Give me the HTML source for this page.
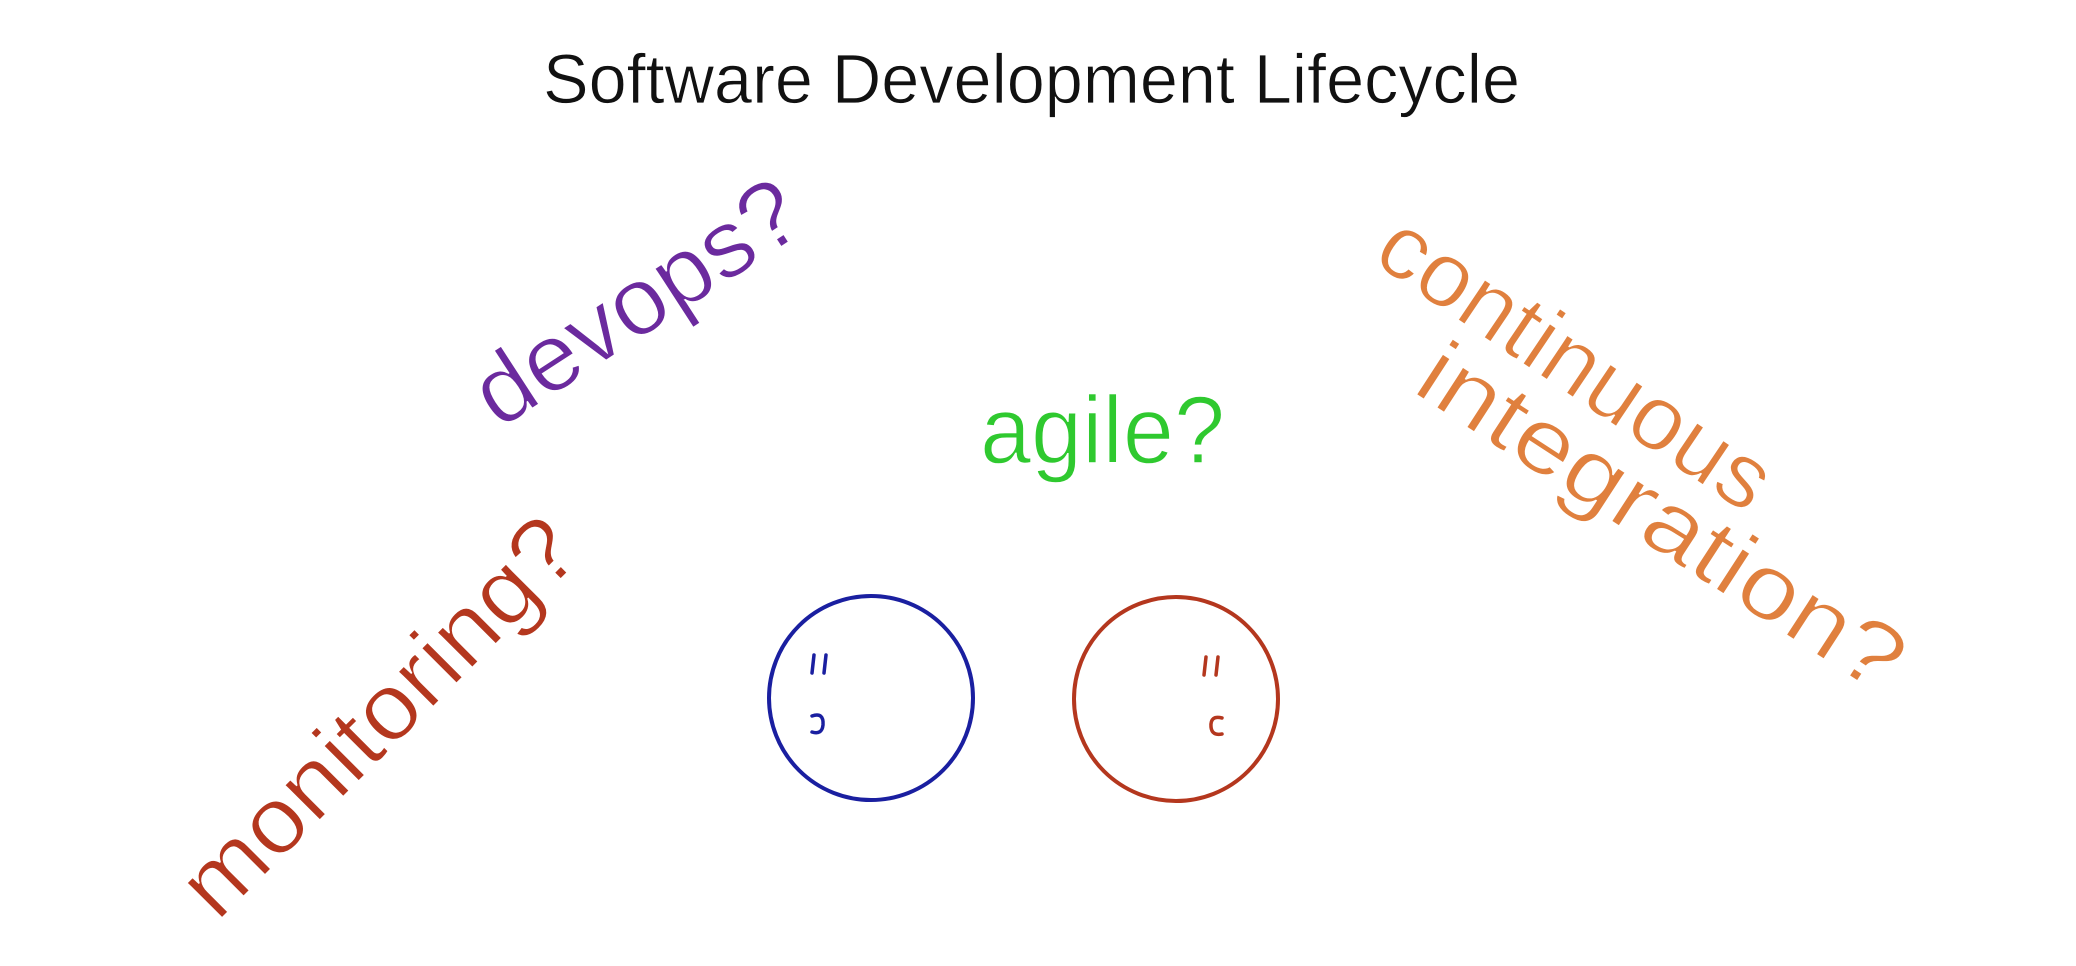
<!DOCTYPE html>
<html><head><meta charset="utf-8"><style>
html,body{margin:0;padding:0;background:#fff;width:2076px;height:966px;overflow:hidden}
svg{display:block}
text{font-family:"Liberation Sans",sans-serif;stroke:#fff;stroke-width:1.5px}
</style></head><body>
<svg width="2076" height="966" viewBox="0 0 2076 966">
<rect width="2076" height="966" fill="#fff"/>
<text x="543" y="103" font-size="70" fill="#111" style="stroke-width:0.8px" textLength="977" lengthAdjust="spacingAndGlyphs">Software Development Lifecycle</text>

<g transform="translate(642,311) rotate(-33)">
<text x="0" y="22" font-size="96" fill="#6b2a9e" text-anchor="middle" textLength="370" lengthAdjust="spacingAndGlyphs">devops?</text>
</g>

<text x="980" y="463" font-size="96" fill="#2fc92f" textLength="245" lengthAdjust="spacingAndGlyphs">agile?</text>

<g transform="translate(384,722) rotate(-45)">
<text x="0" y="24" font-size="94" fill="#b4371e" text-anchor="middle" textLength="520" lengthAdjust="spacingAndGlyphs">monitoring?</text>
</g>

<g transform="translate(1572,368) rotate(34)">
<text x="0" y="24" font-size="92" fill="#e0803e" text-anchor="middle" textLength="455" lengthAdjust="spacingAndGlyphs">continuous</text>
</g>
<g transform="translate(1658,523) rotate(33)">
<text x="0" y="24" font-size="92" fill="#e0803e" text-anchor="middle" textLength="560" lengthAdjust="spacingAndGlyphs">integration?</text>
</g>

<circle cx="871" cy="698" r="102" fill="none" stroke="#1a1fa0" stroke-width="4"/>
<path d="M814 655 l-2 18 M826 655 l-2 18" stroke="#1a1fa0" stroke-width="3.5" fill="none" stroke-linecap="round"/>
<path d="M812 716 q12 -4 11 9 q-1 10 -11 7" stroke="#1a1fa0" stroke-width="3.5" fill="none" stroke-linecap="round"/>

<circle cx="1176" cy="699" r="102" fill="none" stroke="#b4371e" stroke-width="4"/>
<path d="M1206 657 l-2 18 M1218 657 l-2 18" stroke="#b4371e" stroke-width="3.5" fill="none" stroke-linecap="round"/>
<path d="M1222 718 q-12 -3 -11 9 q1 9 11 7" stroke="#b4371e" stroke-width="3.5" fill="none" stroke-linecap="round"/>
</svg>
</body></html>
